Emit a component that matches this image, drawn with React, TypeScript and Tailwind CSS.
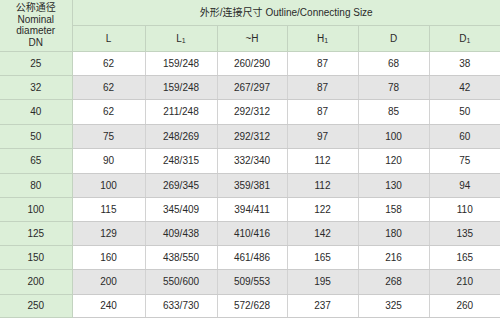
import React from "react";

const rows: string[][] = [
  ["25", "62", "159/248", "260/290", "87", "68", "38"],
  ["32", "62", "159/248", "267/297", "87", "78", "42"],
  ["40", "62", "211/248", "292/312", "87", "85", "50"],
  ["50", "75", "248/269", "292/312", "97", "100", "60"],
  ["65", "90", "248/315", "332/340", "112", "120", "75"],
  ["80", "100", "269/345", "359/381", "112", "130", "94"],
  ["100", "115", "345/409", "394/411", "122", "158", "110"],
  ["125", "129", "409/438", "410/416", "142", "180", "135"],
  ["150", "160", "438/550", "461/486", "165", "216", "165"],
  ["200", "200", "550/600", "509/553", "195", "268", "210"],
  ["250", "240", "633/730", "572/628", "237", "325", "260"],
];

const heights = [24, 24, 25, 24, 25, 24, 24, 24, 24, 25, 23];

function Sub({ base }: { base: string }) {
  return (
    <span>
      {base}
      <span className="text-[7px] relative top-[1px]">1</span>
    </span>
  );
}

export default function App() {
  return (
    <div
      className="w-[500px] h-[318px] overflow-hidden bg-white text-[#2a2a2a] text-[10px]"
      style={{ fontFamily: '"Liberation Sans", "Noto Sans CJK SC", Arial, sans-serif' }}
    >
      <table className="border-collapse table-fixed w-[500px]">
        <colgroup>
          <col className="w-[72px]" />
          <col className="w-[73px]" />
          <col className="w-[72px]" />
          <col className="w-[70px]" />
          <col className="w-[71px]" />
          <col className="w-[71px]" />
          <col className="w-[71px]" />
        </colgroup>
        <thead>
          <tr className="h-[25px] bg-[#dcefd8]">
            <th
              rowSpan={2}
              className="border-r border-b border-[#c3d3c0] font-normal leading-[11.5px] text-center align-middle"
            >
              公称通径
              <br />
              Nominal
              <br />
              diameter
              <br />
              DN
            </th>
            <th colSpan={6} className="border-b border-[#c3d3c0] font-normal text-center">
              外形/连接尺寸 Outline/Connecting Size
            </th>
          </tr>
          <tr className="h-[26px] bg-[#dcefd8]">
            <th className="border-r border-b border-[#c3d3c0] font-normal">L</th>
            <th className="border-r border-b border-[#c3d3c0] font-normal">
              <Sub base="L" />
            </th>
            <th className="border-r border-b border-[#c3d3c0] font-normal">~H</th>
            <th className="border-r border-b border-[#c3d3c0] font-normal">
              <Sub base="H" />
            </th>
            <th className="border-r border-b border-[#c3d3c0] font-normal">D</th>
            <th className="border-b border-[#c3d3c0] font-normal">
              <Sub base="D" />
            </th>
          </tr>
        </thead>
        <tbody>
          {rows.map((r, i) => (
            <tr
              key={r[0]}
              className={i % 2 === 0 ? "bg-white" : "bg-[#e5e5e5]"}
              style={{ height: heights[i] }}
            >
              {r.map((c, j) => (
                <td
                  key={j}
                  className={
                    "text-center border-b border-[#cbcbcb] " +
                    (j === 0 ? "bg-[#dcefd8] border-r border-r-[#c3d3c0] border-b-[#c3d3c0]" : "") +
                    (j > 0 && j < 6 ? "border-r border-r-[#d2d2d2]" : "")
                  }
                >
                  {c}
                </td>
              ))}
            </tr>
          ))}
        </tbody>
      </table>
    </div>
  );
}
